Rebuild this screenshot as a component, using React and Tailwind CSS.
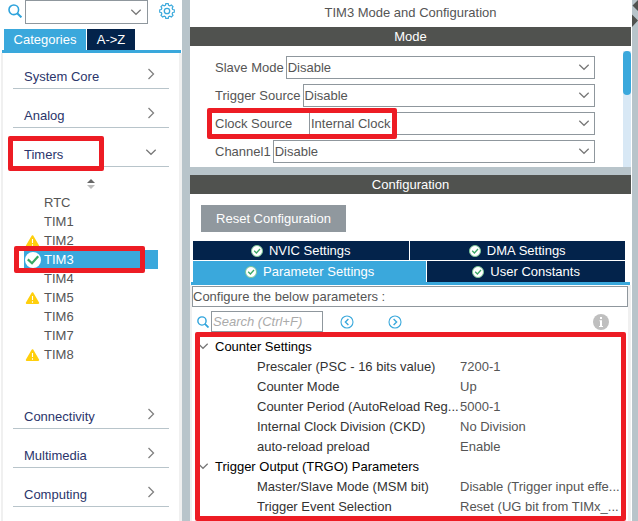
import React from "react";

const timers = [
  { name: "RTC" },
  { name: "TIM1" },
  { name: "TIM2", state: "warning" },
  { name: "TIM3", state: "active" },
  { name: "TIM4" },
  { name: "TIM5", state: "warning" },
  { name: "TIM6" },
  { name: "TIM7" },
  { name: "TIM8", state: "warning" },
];

const modes = [
  { id: "slave", label: "Slave Mode", value: "Disable" },
  { id: "trigger", label: "Trigger Source", value: "Disable" },
  { id: "clock", label: "Clock Source", value: "Internal Clock", marked: true },
  { id: "channel1", label: "Channel1", value: "Disable" },
];

const groups = [
  {
    title: "Counter Settings",
    rows: [
      ["Prescaler (PSC - 16 bits value)", "7200-1"],
      ["Counter Mode", "Up"],
      ["Counter Period (AutoReload Reg...", "5000-1"],
      ["Internal Clock Division (CKD)", "No Division"],
      ["auto-reload preload", "Enable"],
    ],
  },
  {
    title: "Trigger Output (TRGO) Parameters",
    rows: [
      ["Master/Slave Mode (MSM bit)", "Disable (Trigger input effe..."],
      ["Trigger Event Selection", "Reset (UG bit from TIMx_..."],
    ],
  },
];

// Outline of an eight-toothed cog centred on (8, 8).
const gearPath =
  Array.from({ length: 8 }, (_, i) =>
    [
      [-15, 5.9],
      [-10, 7.4],
      [10, 7.4],
      [15, 5.9],
    ]
      .map(([offset, r]) => {
        const a = ((i * 45 + offset) * Math.PI) / 180;
        return `${(8 + r * Math.sin(a)).toFixed(2)} ${(8 - r * Math.cos(a)).toFixed(2)}`;
      })
      .join("L")
  ).reduce((d, tooth, i) => d + (i ? "L" : "M") + tooth, "") + "Z";

function SearchIcon({ className }) {
  return (
    <svg viewBox="0 0 14 14" className={className} fill="none" stroke="#2ea3dc" aria-hidden="true">
      <circle cx="5.8" cy="5.8" r="4.8" strokeWidth="1.6" />
      <path d="M9.2 9.2 13.4 13.4" strokeWidth="2" />
    </svg>
  );
}

function GearIcon() {
  return (
    <svg viewBox="0 0 16 16" className="h-4 w-4" fill="none" stroke="#3ba9dc" aria-hidden="true">
      <path d={gearPath} strokeWidth="1.2" strokeLinejoin="round" />
      <circle cx="8" cy="8" r="2.7" strokeWidth="1.3" />
    </svg>
  );
}

function ChevronDown({ className = "" }) {
  return (
    <svg viewBox="0 0 12 12" className={`h-3 w-3 shrink-0 ${className}`} fill="none" stroke="#777" aria-hidden="true">
      <path d="M1.300 3.800 6 8.300 10.700 3.800" strokeWidth="1.2" />
    </svg>
  );
}

function ChevronRight() {
  return (
    <svg viewBox="0 0 12 12" className="h-3 w-3 shrink-0" fill="none" stroke="#808080" aria-hidden="true">
      <path d="M3.5 1 8.5 6 3.5 11" strokeWidth="1.3" />
    </svg>
  );
}

function WarningIcon() {
  return (
    <svg viewBox="0 0 16 14" className="h-[14px] w-4" aria-hidden="true">
      <path d="M7.5 2.2 13.2 12H1.8Z" fill="#ffcf0d" stroke="#ffcf0d" strokeWidth="2" strokeLinejoin="round" />
      <path d="M7.5 5v4M7.5 10.2v1.5" stroke="#fff" strokeWidth="1.1" />
    </svg>
  );
}

function CheckDisc() {
  return (
    <svg viewBox="0 0 16 16" className="h-4 w-4" aria-hidden="true">
      <circle cx="8" cy="8" r="8" fill="#fff" />
      <path d="M2.800 7.400 7 11.200 13.200 4.200" fill="none" stroke="#37a862" strokeWidth="2.2" />
    </svg>
  );
}

function TabCheck() {
  return (
    <svg viewBox="0 0 12 12" className="h-3 w-3 shrink-0" aria-hidden="true">
      <circle cx="6" cy="6" r="5.5" fill="#fff" stroke="#7cc698" strokeWidth="1" />
      <path d="M3.2 5.8 5.4 8 9 4" fill="none" stroke="#3aa765" strokeWidth="1.3" />
    </svg>
  );
}

function CircleArrow({ d }) {
  return (
    <svg viewBox="0 0 14 14" className="h-[14px] w-[14px]" fill="none" stroke="#3ba9dc" aria-hidden="true">
      <circle cx="7" cy="7" r="6" strokeWidth="1.1" />
      <path d={d} strokeWidth="1.4" />
    </svg>
  );
}

function Category({ name, open, children }) {
  return (
    <li>
      <button
        type="button"
        aria-expanded={!!open}
        className="relative flex h-[25px] w-full items-center justify-between border-b border-[#b8c4ca] pl-[11px] pr-3 text-left text-[#2b356b]"
      >
        {name}
        <span className="pb-1">{open ? <ChevronDown /> : <ChevronRight />}</span>
        {open && (
          <span className="pointer-events-none absolute -left-[5px] -top-[6px] h-[35px] w-[96px] rounded-[2px] border-[5px] border-[#ed1c24]" />
        )}
      </button>
      {children}
    </li>
  );
}

function Sidebar() {
  return (
    <aside className="flex w-[182px] shrink-0 flex-col">
      <div className="flex h-[29px] items-start">
        <SearchIcon className="ml-2 mt-1 h-[14px] w-[14px]" />
        <div className="relative ml-[3px] h-6 w-[123px]">
          <select aria-label="Find peripheral" className="h-full w-full appearance-none border border-[#8f979d] bg-white">
            <option />
          </select>
          <ChevronDown className="pointer-events-none absolute right-[6px] top-[6px]" />
        </div>
        <button type="button" aria-label="Settings" className="ml-[11px] mt-[3px]">
          <GearIcon />
        </button>
      </div>
      <div role="tablist" className="ml-[2px] mr-px flex gap-px border-b-[3px] border-[#3aa8dc] pl-[2px]">
        <button type="button" role="tab" aria-selected="true" className="h-[21px] w-[82px] bg-[#3aa8dc] text-center leading-[21px] text-white">
          Categories
        </button>
        <button type="button" role="tab" aria-selected="false" className="h-[21px] w-12 bg-[#03234b] text-center leading-[21px] text-white">
          A-&gt;Z
        </button>
      </div>
      <ul className="ml-px flex grow flex-col gap-[14px] border-l-2 border-r-[3px] border-[#f0f0f0] px-[10px] pt-[11px]">
        <Category name="System Core" />
        <Category name="Analog" />
        <Category name="Timers" open>
          <div className="px-[11px] pb-[26px] pt-3">
            <svg viewBox="0 0 8 10" className="mx-auto mb-1 h-[10px] w-2" aria-hidden="true">
              <path d="M4 0 8 4H0Z" fill="#666" />
              <path d="M4 10 8 6H0Z" fill="#bbb" />
            </svg>
            <ul>
              {timers.map((t) => (
                <li key={t.name}>
                  <button
                    type="button"
                    className={`relative flex h-[19px] w-full items-center gap-[3px] pl-px text-left ${
                      t.state === "active" ? "bg-[#3aa8dc] text-white" : "text-[#555]"
                    }`}
                  >
                    <span className="w-4">
                      {t.state === "warning" && <WarningIcon />}
                      {t.state === "active" && <CheckDisc />}
                    </span>
                    {t.name}
                    {t.state === "active" && (
                      <span className="pointer-events-none absolute -left-[10px] -top-1 z-10 h-[27px] w-[131px] rounded-[2px] border-[5px] border-[#ed1c24]" />
                    )}
                  </button>
                </li>
              ))}
            </ul>
          </div>
        </Category>
        <Category name="Connectivity" />
        <Category name="Multimedia" />
        <Category name="Computing" />
      </ul>
    </aside>
  );
}

function ModePanel() {
  return (
    <section className="bg-white">
      <h2 className="h-[19px] bg-[#50524f] text-center leading-[19px] text-white">Mode</h2>
      <div className="flex h-[121px]">
        <div className="flex grow flex-col gap-[5px] pl-[25px] pr-7 pt-[10px]">
          {modes.map((m) => (
            <div key={m.id} className="relative flex h-[23px] items-center gap-[2px]">
              <label htmlFor={m.id} className={m.marked ? "w-[92px]" : ""}>
                {m.label}
              </label>
              <div className="relative h-full grow">
                <select id={m.id} className="h-full w-full appearance-none border border-[#8f979d] bg-white pl-px">
                  <option>{m.value}</option>
                </select>
                <ChevronDown className="pointer-events-none absolute right-[5px] top-[5px]" />
              </div>
              {m.marked && (
                <span className="pointer-events-none absolute -left-2 -top-1 h-[31px] w-[190px] rounded-[2px] border-[5px] border-[#ed1c24]" />
              )}
            </div>
          ))}
        </div>
        <div className="mt-[5px] w-2 bg-[#d8e8f5]">
          <div className="h-11 rounded-full bg-[#3aa8dc]" />
        </div>
      </div>
    </section>
  );
}

function Tab({ name, active, className }) {
  return (
    <button
      type="button"
      role="tab"
      aria-selected={!!active}
      className={`flex items-center justify-center gap-[6px] text-white ${active ? "bg-[#3aa8dc]" : "bg-[#03234b]"} ${className}`}
    >
      <TabCheck />
      {name}
    </button>
  );
}

function Parameters() {
  return (
    <div className="relative px-[10px] pb-[5px] pt-1">
      <table className="w-full table-fixed border-collapse">
        <colgroup>
          <col className="w-[258px]" />
          <col />
        </colgroup>
        {groups.map((g) => (
          <tbody key={g.title}>
            <tr className="h-5">
              <th colSpan="2" scope="rowgroup" className="p-0 text-left font-normal text-black">
                <div className="-ml-[5px] flex h-5 items-center gap-[6px]">
                  <ChevronDown />
                  {g.title}
                </div>
              </th>
            </tr>
            {g.rows.map(([k, v]) => (
              <tr key={k} className="h-5">
                <th scope="row" className="whitespace-nowrap p-0 pl-[55px] text-left font-normal text-[#333]">
                  {k}
                </th>
                <td className="whitespace-nowrap p-0">{v}</td>
              </tr>
            ))}
          </tbody>
        ))}
      </table>
      <span className="pointer-events-none absolute bottom-0 left-[3px] right-[2px] top-0 rounded-[2px] border-[5px] border-[#ed1c24]" />
    </div>
  );
}

function ConfigurationPanel() {
  return (
    <section className="flex grow flex-col bg-white">
      <h2 className="h-[19px] bg-[#50524f] text-center leading-[19px] text-white">Configuration</h2>
      <div className="px-[11px] pb-[9px] pt-[11px]">
        <button type="button" className="h-[27px] w-[145px] bg-[#90989e] text-center text-white">
          Reset Configuration
        </button>
      </div>
      <div role="tablist" className="ml-px mr-px flex flex-col gap-px border-b-[3px] border-[#3aa8dc] pl-[2px] pr-[5px]">
        <div className="flex gap-px">
          <Tab name="NVIC Settings" className="h-[19px] flex-1" />
          <Tab name="DMA Settings" className="h-[19px] flex-1" />
        </div>
        <div className="flex gap-px">
          <Tab name="Parameter Settings" active className="h-[21px] w-[54%]" />
          <Tab name="User Constants" className="h-[21px] flex-1" />
        </div>
      </div>
      <div className="flex grow flex-col border-l-2 border-r-[3px] border-[#f0f0f0] pt-px">
        <p className="h-[21px] border border-[#8f979d] leading-[19px]">Configure the below parameters :</p>
        <div className="flex h-[25px] items-center pl-[5px] pr-[19px] pt-1">
          <SearchIcon className="h-3 w-3" />
          <input
            type="text"
            aria-label="Search parameters"
            placeholder="Search (Ctrl+F)"
            className="ml-[2px] h-[21px] w-[112px] border border-[#8f979d] px-px italic outline-none placeholder:text-[#aaa]"
          />
          <button type="button" aria-label="Previous match" className="ml-[17px]">
            <CircleArrow d="M8.4 4 5.4 7 8.4 10" />
          </button>
          <button type="button" aria-label="Next match" className="ml-[34px]">
            <CircleArrow d="M5.6 4 8.6 7 5.6 10" />
          </button>
          <button type="button" aria-label="Information" className="ml-auto">
            <svg viewBox="0 0 16 16" className="h-4 w-4" aria-hidden="true">
              <circle cx="8" cy="8" r="8" fill="#bfbfbf" />
              <path d="M7 3h2v2H7zM6.500 6.200H9v5.800h1V13H6v-1h1V7.200H6.500z" fill="#fff" />
            </svg>
          </button>
        </div>
        <Parameters />
      </div>
    </section>
  );
}

export default function App() {
  return (
    <div className="flex min-h-screen bg-white font-['Liberation_Sans',Arial,sans-serif] text-[13px] leading-[19px] text-[#555]">
      <Sidebar />
      <div className="w-2 shrink-0 bg-[#b8c4ca]" />
      <main className="flex min-w-0 grow flex-col">
        <h1 className="h-[27px] text-center leading-[25px]">TIM3 Mode and Configuration</h1>
        <ModePanel />
        <div className="h-2 bg-[#b8c4ca]" />
        <ConfigurationPanel />
      </main>
      <div className="ml-px w-[6px] shrink-0 bg-[#b8c4ca]">
        <svg viewBox="0 0 6 28" className="h-7 w-[6px]" fill="#50524f" aria-hidden="true">
          <path d="M6 0V11L.5 5.500ZM0 14.500 6 20.500 0 27Z" />
        </svg>
      </div>
    </div>
  );
}
